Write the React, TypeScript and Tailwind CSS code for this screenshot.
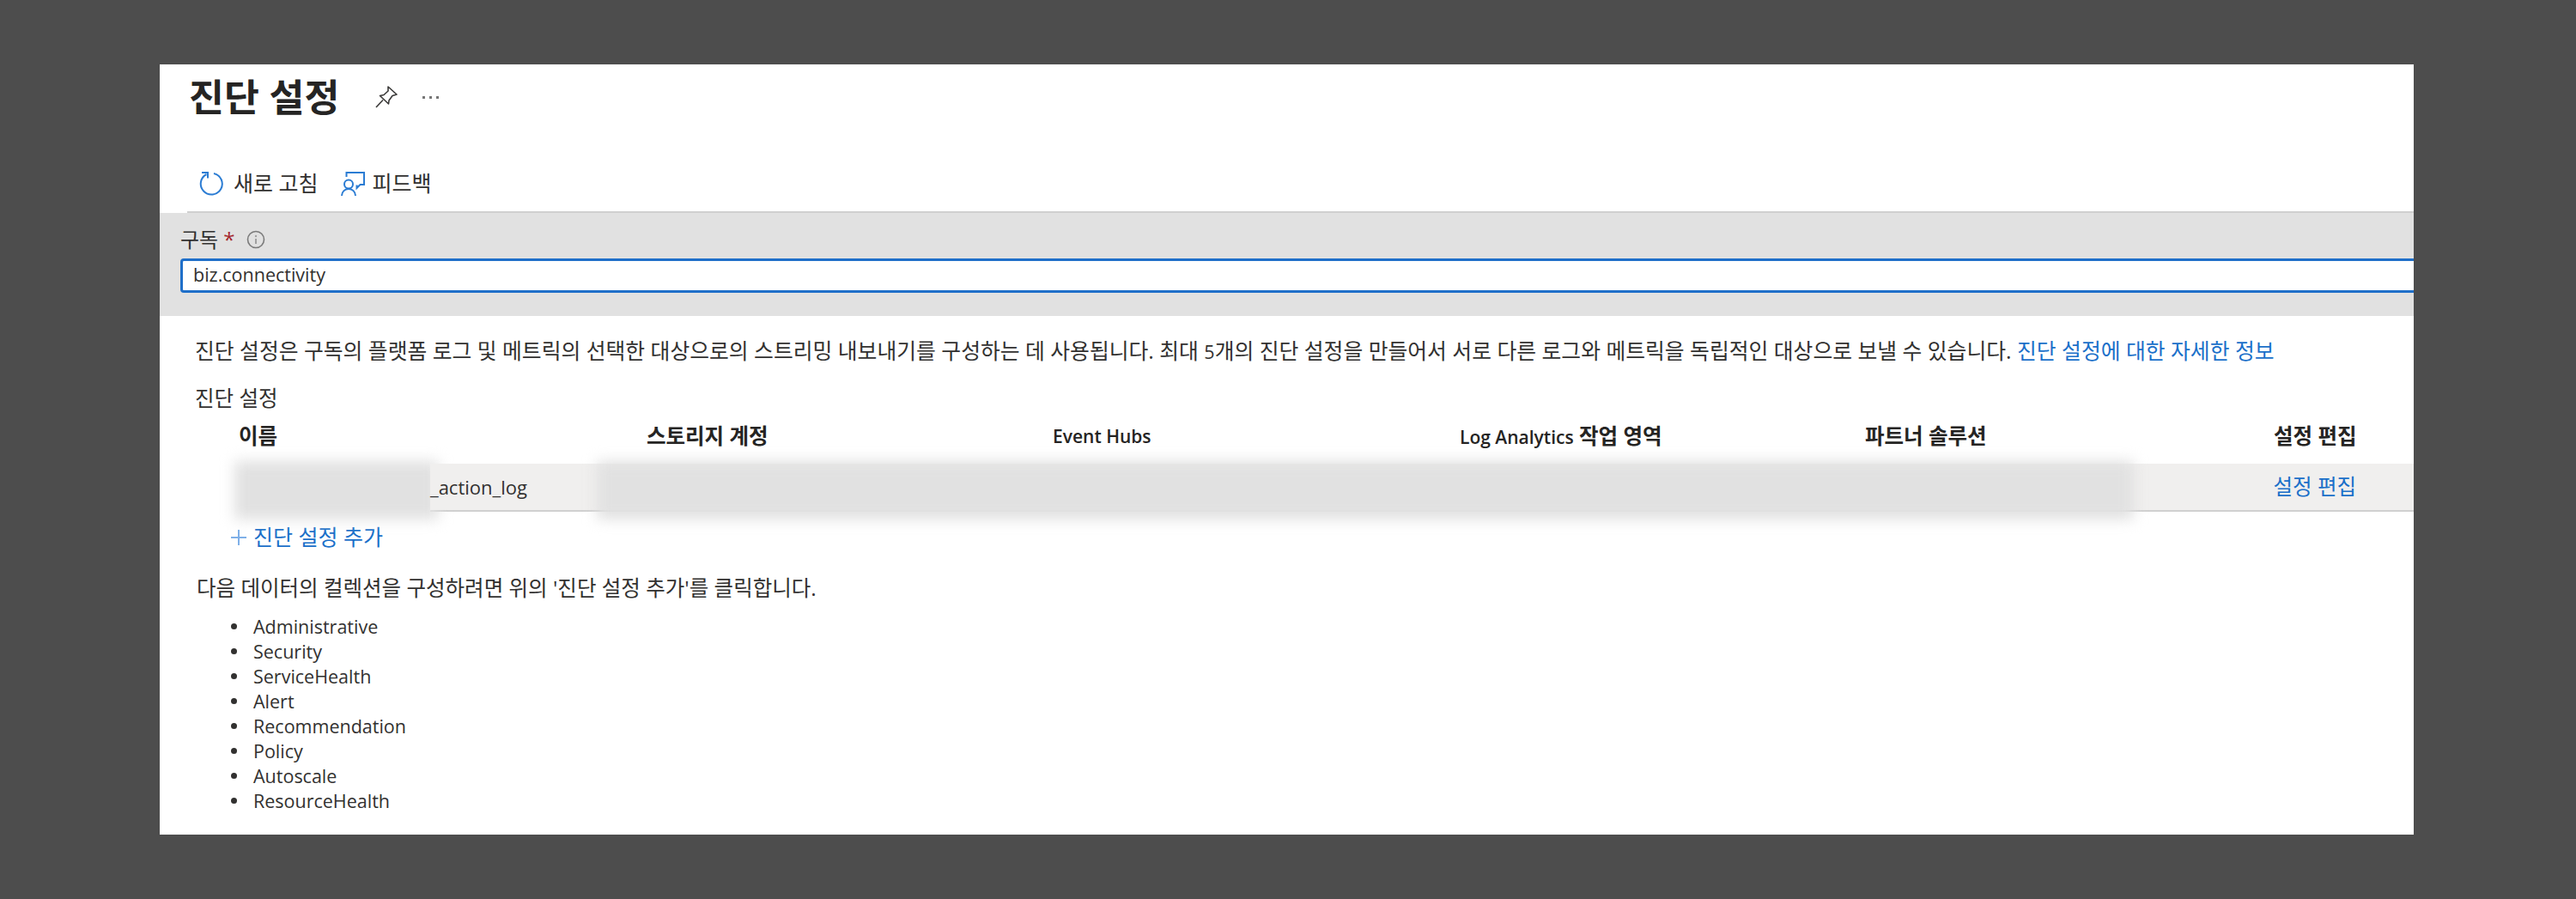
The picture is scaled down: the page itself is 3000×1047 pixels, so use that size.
import React from 'react';

const FONT = "font-['Open_Sans','Noto_Sans_CJK_KR',sans-serif]";

const RefreshIcon = () => (
  <svg width="28" height="28" viewBox="0 0 28 28" fill="none" stroke="#2b7cd3" strokeWidth="2">
    <path d="M8.500 3 A12.500 12.500 0 1 0 17 1.900" />
    <path d="M3 1 H10 V7.500" />
  </svg>
);

const FeedbackIcon = () => (
  <svg width="28" height="28" viewBox="0 0 28 28" fill="none" stroke="#2b7cd3" strokeWidth="2">
    <path d="M6.500 6 V1 H27 V15 H22.500 L18.500 19 V15.500" />
    <circle cx="9" cy="14.500" r="5" />
    <path d="M1 28 C1 23 5 20 9 20 C13 20 17 23 17 28" />
  </svg>
);

const PinIcon = () => (
  <svg width="26" height="26" viewBox="0 0 26 26" fill="none" stroke="#3b3a39" strokeWidth="1.6">
    <path d="M15 1 L25 10 L20 11.500 L16 17 L15.500 21 L5.500 11.500 L10 10.500 L15 6 Z" strokeLinejoin="round" />
    <path d="M9 16.500 L1 25" />
  </svg>
);

const InfoIcon = () => (
  <svg width="22" height="22" viewBox="0 0 22 22" fill="none">
    <circle cx="11" cy="11" r="9.500" stroke="#7a7a7a" strokeWidth="1.600" />
    <path d="M11 10 V16" stroke="#a0a0a0" strokeWidth="2" />
    <circle cx="11" cy="7" r="1.200" fill="#a0a0a0" />
  </svg>
);

const categories = [
  'Administrative',
  'Security',
  'ServiceHealth',
  'Alert',
  'Recommendation',
  'Policy',
  'Autoscale',
  'ResourceHealth',
];

export default function App() {
  return (
    <div className={`h-[1047px] w-[3000px] overflow-hidden bg-[#4d4d4d] pt-[75px] pl-[186px] text-[#323130] ${FONT}`}>
      <div className="h-[897px] w-[2625px] overflow-hidden bg-white">
        {/* title */}
        <div className="flex h-[76px] items-center pl-[34px]">
          <h1 className="text-[44.5px] leading-none font-semibold text-[#252423]">진단 설정</h1>
          <div className="ml-[42px] flex items-center">
            <PinIcon />
            <span className="ml-[29px] flex gap-[5px]">
              <i className="h-[3px] w-[3px] bg-[#777]" />
              <i className="h-[3px] w-[3px] bg-[#777]" />
              <i className="h-[3px] w-[3px] bg-[#777]" />
            </span>
          </div>
        </div>

        {/* toolbar */}
        <div className="mt-[49px] flex h-[28px] items-center pl-[46px] text-[25px]">
          <RefreshIcon />
          <span className="ml-[12px]">새로 고침</span>
          <span className="ml-[26px]"><FeedbackIcon /></span>
          <span className="ml-[9px]">피드백</span>
        </div>

        {/* subscription filter */}
        <div className="mt-[18px] ml-[32px] h-[2px] bg-[#d0d0d0]" />
        <div className="h-[120px] bg-[#e1e1e1] pt-[19px] pl-[24px]">
          <div className="flex h-[24px] items-center text-[24px]">
            <span>구독</span>
            <span className="ml-[6px] text-[#a4262c]">*</span>
            <span className="ml-[14px]"><InfoIcon /></span>
          </div>
          <div className="mt-[10px] flex h-[40px] items-center rounded-l-[4px] border-[3px] border-r-0 border-[#1f6fc9] bg-white pb-[2px] pl-[12px] text-[21.5px]">
            biz.connectivity
          </div>
        </div>

        {/* body */}
        <div className="pt-[25px] text-[24.5px]">
          <p className="pl-[41px] text-[24.8px] leading-[30px] whitespace-nowrap">
            진단 설정은 구독의 플랫폼 로그 및 메트릭의 선택한 대상으로의 스트리밍 내보내기를 구성하는 데 사용됩니다. 최대 <span className="text-[21.5px]">5</span>개의 진단 설정을 만들어서 서로 다른 로그와 메트릭을 독립적인 대상으로 보낼 수 있습니다.{' '}
            <a className="text-[#1a6fc9]">진단 설정에 대한 자세한 정보</a>
          </p>
          <p className="mt-[24px] pl-[41px] leading-[30px]">진단 설정</p>

          <div className="mt-[14px] grid grid-cols-[475px_473px_474px_472px_476px_auto] pl-[92px] leading-[30px] font-semibold text-[#252423]">
            <span>이름</span>
            <span>스토리지 계정</span>
            <span className="text-[21px]">Event Hubs</span>
            <span><span className="text-[21px]">Log Analytics</span> 작업 영역</span>
            <span>파트너 솔루션</span>
            <span>설정 편집</span>
          </div>

          {/* row, with the redacted parts blurred over it */}
          <div className="relative mt-[16px] ml-[315px] flex h-[56px] items-center justify-between border-b-2 border-[#d0d0d0] bg-[#f0efee] pr-[67px] leading-[30px]">
            <div className="absolute top-[-3px] left-[-228px] h-[68px] w-[238px] bg-[#e1e1e1] blur-[8px]" />
            <div className="absolute inset-y-0 left-0 w-[240px] bg-[#f0efee]" />
            <span className="relative text-[22px]">_action_log</span>
            <span className="relative text-[#1a6fc9]">설정 편집</span>
            <div className="absolute top-[-3px] left-[194px] h-[68px] w-[1790px] bg-[#e1e1e1] blur-[8px]" />
          </div>

          <div className="mt-[15px] flex h-[30px] items-center pl-[83px] text-[25px] text-[#1a6fc9]">
            <span className="relative h-[18px] w-[18px]">
              <i className="absolute top-[8px] left-0 h-[2px] w-[18px] bg-[#7fb0e8]" />
              <i className="absolute top-0 left-[8px] h-[18px] w-[2px] bg-[#7fb0e8]" />
            </span>
            <span className="ml-[8px]">진단 설정 추가</span>
          </div>

          <p className="mt-[29px] pl-[43px] leading-[30px]">다음 데이터의 컬렉션을 구성하려면 위의 '진단 설정 추가'를 클릭합니다.</p>
          <ul className="mt-[15px] pl-[109px] text-[21.5px] leading-[29px]">
            {categories.map((name) => (
              <li key={name} className="relative">
                <i className="absolute top-[11px] left-[-26px] h-[7px] w-[7px] rounded-full bg-[#323130]" />
                {name}
              </li>
            ))}
          </ul>
        </div>
      </div>
    </div>
  );
}
